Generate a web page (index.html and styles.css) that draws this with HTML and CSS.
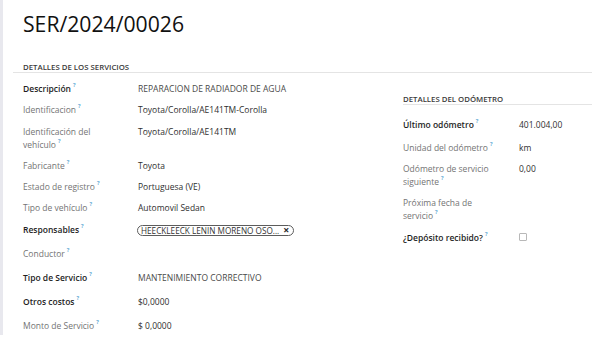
FILE: index.html
```html
<!DOCTYPE html>
<html lang="es">
<head>
<meta charset="utf-8">
<title>SER/2024/00026</title>
<link rel="stylesheet" href="styles.css">
</head>
<body>
<div class="sheet">
  <h1 class="title">SER/2024/00026</h1>
  <div class="section-head">DETALLES DE LOS SERVICIOS</div>
  <div class="groups">
    <div class="group group-left">
      <div class="row"><div class="label strong">Descripción<sup class="tip">?</sup></div><div class="value muted-val">REPARACION DE RADIADOR DE AGUA</div></div>
      <div class="row"><div class="label">Identificacion<sup class="tip">?</sup></div><div class="value">Toyota/Corolla/AE141TM-Corolla</div></div>
      <div class="row"><div class="label">Identificación del vehículo<sup class="tip">?</sup></div><div class="value">Toyota/Corolla/AE141TM</div></div>
      <div class="row"><div class="label">Fabricante<sup class="tip">?</sup></div><div class="value">Toyota</div></div>
      <div class="row"><div class="label">Estado de registro<sup class="tip">?</sup></div><div class="value">Portuguesa (VE)</div></div>
      <div class="row"><div class="label">Tipo de vehículo<sup class="tip">?</sup></div><div class="value">Automovil Sedan</div></div>
      <div class="row row-tall"><div class="label strong">Responsables<sup class="tip">?</sup></div><div class="value"><span class="tag"><span class="tag-text">HEECKLEECK LENIN MORENO OSO...</span><span class="tag-x">×</span></span></div></div>
      <div class="row row-tall"><div class="label">Conductor<sup class="tip">?</sup></div><div class="value"></div></div>
      <div class="row row-tall"><div class="label strong">Tipo de Servicio<sup class="tip">?</sup></div><div class="value muted-val">MANTENIMIENTO CORRECTIVO</div></div>
      <div class="row row-tall"><div class="label strong">Otros costos<sup class="tip">?</sup></div><div class="value">$0,0000</div></div>
      <div class="row row-tall"><div class="label">Monto de Servicio<sup class="tip">?</sup></div><div class="value">$ 0,0000</div></div>
    </div>
    <div class="group group-right">
      <div class="group-head">DETALLES DEL ODÓMETRO</div>
      <div class="row row-first"><div class="label strong">Último odómetro<sup class="tip">?</sup></div><div class="value">401.004,00</div></div>
      <div class="row"><div class="label">Unidad del odómetro<sup class="tip">?</sup></div><div class="value">km</div></div>
      <div class="row"><div class="label">Odómetro de servicio siguiente<sup class="tip">?</sup></div><div class="value">0,00</div></div>
      <div class="row"><div class="label">Próxima fecha de servicio<sup class="tip">?</sup></div><div class="value"></div></div>
      <div class="row"><div class="label strong">¿Depósito recibido?<sup class="tip">?</sup></div><div class="value"><span class="check"></span></div></div>
    </div>
  </div>
</div>
</body>
</html>
```

FILE: styles.css
```css
* { box-sizing: border-box; }

html, body {
  margin: 0;
  padding: 0;
  background: #ffffff;
}

body {
  font-family: "Open Sans", "Noto Sans", "Liberation Sans", sans-serif;
  font-size: 8.5px;
  color: #333333;
}

.sheet {
  height: 335px;
  border-left: 3px solid #e8e8ee;
  padding: 10px 0 0 10px;
}

.title {
  margin: 0 0 0 10px;
  font-size: 21.2px;
  line-height: 28px;
  font-weight: 500;
  color: #111111;
}

.section-head {
  margin-top: 24px;
  padding-left: 10px;
  font-size: 7.8px;
  line-height: 10px;
  font-weight: 600;
  color: #3a3a3a;
  border-bottom: 1px solid #e4e4e4;
}

.groups {
  display: flex;
  padding-left: 10px;
}

.group-left {
  width: 380px;
  padding-top: 9px;
}

.group-right {
  flex: 1;
  padding-top: 21px;
}

.group-head {
  font-size: 7.8px;
  line-height: 10px;
  font-weight: 600;
  color: #3a3a3a;
  border-bottom: 1px solid #e4e4e4;
  margin-bottom: 12.5px;
}

.row {
  display: grid;
  grid-template-columns: 115px 1fr;
  line-height: 13px;
  padding-bottom: 8.3px;
}

.group-right .row {
  grid-template-columns: 116px 1fr;
}

.group-right .label {
  padding-right: 24px;
}

.row-first {
  padding-bottom: 10.3px;
}

.row-tall {
  min-height: 24px;
  padding-bottom: 0;
}

.label {
  padding-right: 14px;
  color: #747474;
}

.label.strong {
  color: #1e1e1e;
  font-weight: 600;
}

.value {
  color: #2f2f2f;
}

.muted-val {
  color: #4a4a4a;
}

.tip {
  display: inline-block;
  font-size: 5.5px;
  line-height: 6px;
  font-weight: 700;
  color: #6aaed6;
  margin-left: 2px;
  vertical-align: top;
}

.tag {
  display: inline-flex;
  align-items: center;
  margin: 2px 0 0 -1px;
  height: 11px;
  padding: 0 4px 0 3px;
  border: 1px solid #5c5c5c;
  border-radius: 6px;
  font-size: 8.2px;
  line-height: 9px;
  color: #333333;
  gap: 4px;
}

.tag-x {
  font-weight: 700;
  font-size: 10.5px;
  line-height: 9px;
  color: #2a2a2a;
}

.check {
  display: block;
  width: 8px;
  height: 8px;
  margin-top: 2px;
  border: 1px solid #b8b8b8;
  border-radius: 1px;
}
```
